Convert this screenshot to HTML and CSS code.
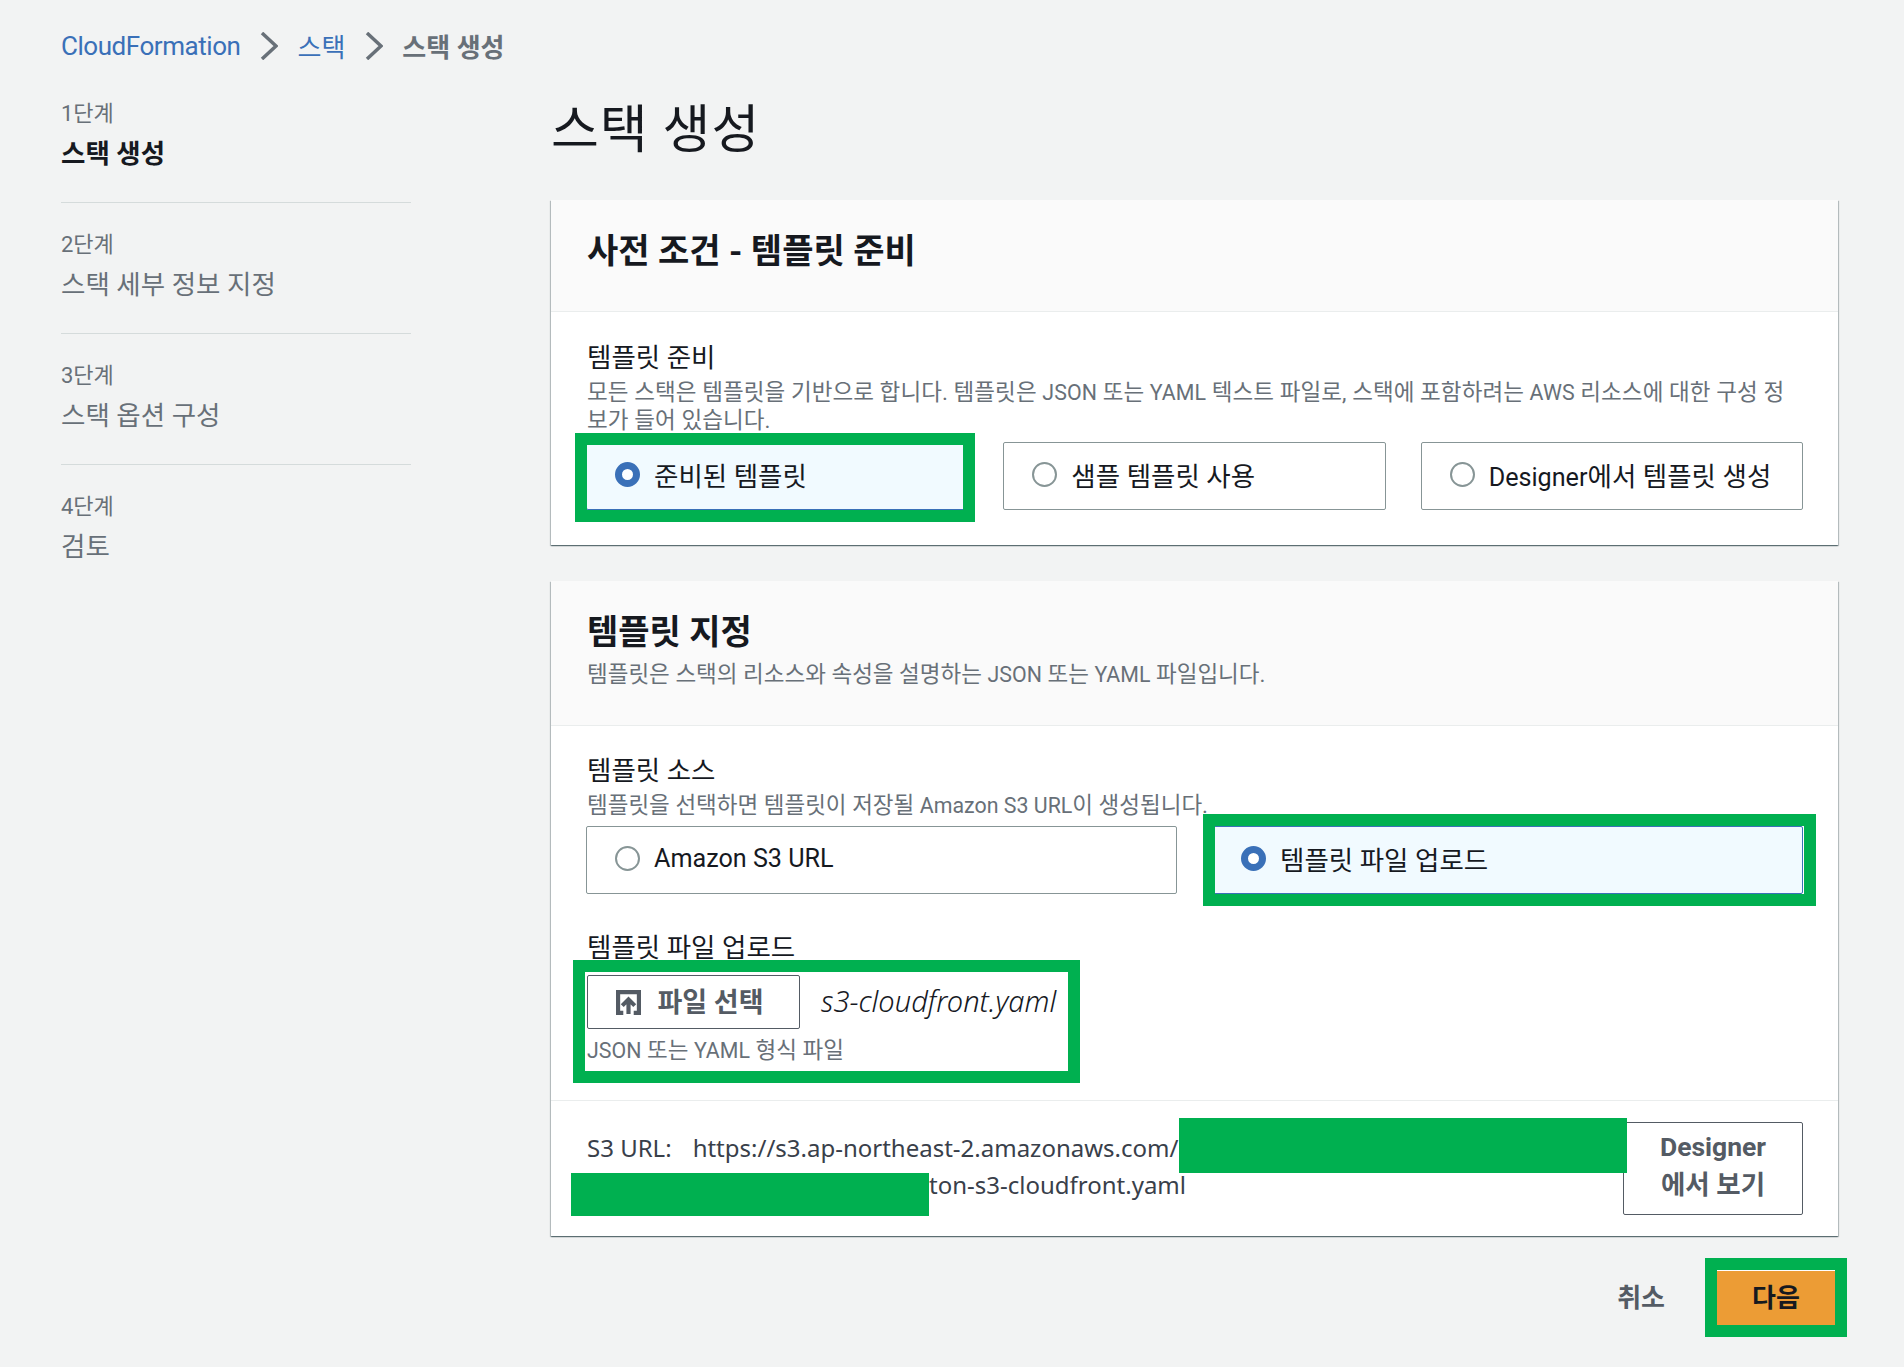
FILE: index.html
```html
<!DOCTYPE html>
<html lang="ko">
<head>
	<title>스택 생성</title>
	<meta charset="utf-8">
	<link rel="stylesheet" href="styles.css">
</head>
<body>

	<nav class="crumbs">
		<a class="crumb-root" href="#">CloudFormation</a>
		<svg class="chev" viewBox="0 0 18 28"><path d="M2 1l14 13L2 27"/></svg>
		<a href="#">스택</a>
		<svg class="chev" viewBox="0 0 18 28"><path d="M2 1l14 13L2 27"/></svg>
		<span class="crumb-now">스택 생성</span>
	</nav>

	<div class="layout">
		<aside class="steps">
			<div class="step">
				<div class="step-num">1단계</div>
				<div class="step-name current">스택 생성</div>
			</div>
			<div class="step">
				<div class="step-num">2단계</div>
				<div class="step-name">스택 세부 정보 지정</div>
			</div>
			<div class="step">
				<div class="step-num">3단계</div>
				<div class="step-name">스택 옵션 구성</div>
			</div>
			<div class="step">
				<div class="step-num">4단계</div>
				<div class="step-name">검토</div>
			</div>
		</aside>

		<main class="main">
			<h1 class="page-title">스택 생성</h1>

			<section class="panel">
				<div class="panel-head">
					<h2>사전 조건 - 템플릿 준비</h2>
				</div>
				<div class="panel-body first">
					<div class="label">템플릿 준비</div>
					<div class="hint">모든 스택은 템플릿을 기반으로 합니다. 템플릿은 <span class="latin">JSON</span> 또는 <span class="latin">YAML</span> 텍스트 파일로, 스택에 포함하려는 <span class="latin">AWS</span> 리소스에 대한 구성 정<br>보가 들어 있습니다.</div>
					<div class="cards three">
						<div class="card selected">
							<span class="radio on"></span>준비된 템플릿
							<span class="mark mark-ready"></span>
						</div>
						<div class="card"><span class="radio"></span>샘플 템플릿 사용</div>
						<div class="card"><span class="radio"></span><span><span class="latin">Designer</span>에서 템플릿 생성</span></div>
					</div>
				</div>
			</section>

			<section class="panel second">
				<div class="panel-head sub">
					<h2>템플릿 지정</h2>
					<p class="panel-desc">템플릿은 스택의 리소스와 속성을 설명하는 <span class="latin">JSON</span> 또는 <span class="latin">YAML</span> 파일입니다.</p>
				</div>
				<div class="panel-body source">
					<div class="label">템플릿 소스</div>
					<div class="hint">템플릿을 선택하면 템플릿이 저장될 <span class="latin">Amazon S3 URL</span>이 생성됩니다.</div>
					<div class="cards two">
						<div class="card"><span class="radio"></span><span class="latin">Amazon S3 URL</span></div>
						<div class="card selected">
							<span class="radio on"></span>템플릿 파일 업로드
							<span class="mark mark-upload"></span>
						</div>
					</div>

					<div class="label upload-label">템플릿 파일 업로드</div>
					<div class="upload">
						<div class="file-row">
							<button type="button" class="file-btn">
								<svg class="up-icon" viewBox="0 0 24 24"><path d="M7 22H2V2h20v20h-5M12 23V10M6 15l6-6 6 6"/></svg>
								파일 선택
							</button>
							<span class="file-name">s3-cloudfront.yaml</span>
						</div>
						<div class="hint file-hint"><span class="latin">JSON</span> 또는 <span class="latin">YAML</span> 형식 파일</div>
						<span class="mark mark-file"></span>
					</div>
				</div>
				<div class="panel-foot">
					<div class="url">
						<p class="url-line">S3 URL:<span class="url-link">https://s3.ap-northeast-2.amazonaws.com/</span><span class="redact redact-top"></span></p>
						<p class="url-line tail">ton-s3-cloudfront.yaml<span class="redact redact-bottom"></span></p>
					</div>
					<button type="button" class="designer-btn">Designer<br>에서 보기</button>
				</div>
			</section>

			<div class="actions">
				<a class="cancel" href="#">취소</a>
				<button type="button" class="next-btn">다음<span class="mark mark-next"></span></button>
			</div>
		</main>
	</div>

</body>
</html>
```

FILE: styles.css
```css
* {
	box-sizing: border-box;
}
body {
	margin: 0;
	min-height: 1367px;
	background-color: #f2f3f3;
	color: #16191f;
	font-family: Roboto, "Noto Sans CJK KR", sans-serif;
}
h1, h2, p {
	margin: 0;
}
a {
	text-decoration: none;
}
.latin {
	font-size: .95em;
	line-height: 1;
}

/* breadcrumb */
.crumbs {
	display: flex;
	align-items: center;
	height: 92px;
	padding: 0 0 1px 61px;
	font-size: 26px;
}
.crumbs a {
	color: #3a70b8;
}
.crumb-root {
	letter-spacing: -.45px;
}
.crumb-now {
	color: #687078;
	font-weight: 700;
}
.chev {
	width: 18px;
	height: 28px;
	margin: 0 19px 0 20px;
	fill: none;
	stroke: #687078;
	stroke-width: 3.5;
}

.layout {
	display: flex;
	padding: 0 66px 0 61px;
}

/* left steps */
.steps {
	width: 350px;
	margin-right: 140px;
	flex: none;
}
.step {
	padding-top: 20px;
	padding-bottom: 31px;
	border-bottom: 1px solid #d5dbdb;
}
.step:first-child {
	padding-top: 0;
}
.step:last-child {
	border-bottom: 0;
}
.step-num {
	line-height: 44px;
	font-size: 22px;
	color: #687078;
}
.step-name {
	line-height: 35px;
	font-size: 26.5px;
	color: #687078;
}
.step-name.current {
	color: #16191f;
	font-weight: 700;
}

.main {
	flex: 1;
	min-width: 0;
}
.page-title {
	height: 108px;
	line-height: 78px;
	font-size: 52px;
	font-weight: 400;
	letter-spacing: 1px;
}

/* panels */
.panel {
	background-color: #fff;
	box-shadow: 0 1px 1px 0 rgba(0, 28, 36, .4), 1px 1px 1px 0 rgba(0, 28, 36, .2), -1px 1px 1px 0 rgba(0, 28, 36, .2);
}
.panel.second {
	margin-top: 36px;
}
.panel-head {
	height: 112px;
	padding: 31px 35px 0 36px;
	background-color: #fafafa;
	border-bottom: 1px solid #eaeded;
}
.panel-head.sub {
	height: 145px;
	padding-top: 31px;
}
.panel-head h2 {
	line-height: 40px;
	font-size: 34px;
	font-weight: 700;
}
.panel-desc {
	margin-top: 7px;
	line-height: 30px;
	font-size: 22.5px;
	color: #687078;
}
.panel-body {
	padding: 29px 35px 35px 36px;
}
.panel-body.source {
	padding-top: 28px;
	padding-bottom: 36px;
}
.label {
	line-height: 34px;
	font-size: 26.5px;
}
.hint {
	margin-top: 3px;
	line-height: 28px;
	font-size: 22.5px;
	color: #687078;
}
.first .hint {
	letter-spacing: .07px;
}

/* radio cards */
.cards {
	display: grid;
	gap: 35px;
	margin: 8px 0 0 -1px;
}
.source .cards {
	margin-top: 7px;
}
.cards.three {
	grid-template-columns: 1fr 1fr 1fr;
}
.cards.two {
	grid-template-columns: 1fr 1fr;
}
.card {
	position: relative;
	display: flex;
	align-items: center;
	height: 68px;
	padding: 0 0 3px 28px;
	background-color: #fff;
	border: 1px solid #879596;
	border-radius: 2px;
	font-size: 26.5px;
}
.card.selected {
	background-color: #f1faff;
	border-color: #3a70b8;
}
.radio {
	width: 25px;
	height: 25px;
	margin-right: 14px;
	background-color: #fff;
	border: 2px solid #879596;
	border-radius: 50%;
	flex: none;
}
.radio.on {
	border: 7px solid #3a70b8;
}

/* file upload */
.upload-label {
	margin-top: 37px;
}
.upload {
	position: relative;
	margin-top: 10px;
}
.file-row {
	display: flex;
	align-items: center;
}
.file-btn {
	display: flex;
	align-items: center;
	justify-content: center;
	width: 213px;
	height: 54px;
	padding: 0 7px 4px 0;
	background-color: #fff;
	border: 1px solid #545b64;
	border-radius: 2px;
	color: #545b64;
	font-family: inherit;
	font-size: 27px;
	font-weight: 700;
}
.up-icon {
	width: 25px;
	height: 25px;
	margin: 4px 16px 0 0;
	fill: none;
	stroke: #545b64;
	stroke-width: 4;
}
.file-name {
	margin: -4px 0 0 21px;
	font-family: "Noto Sans", sans-serif;
	font-size: 29px;
	font-style: italic;
	font-weight: 300;
}
.file-hint {
	margin-top: 7px;
}

/* s3 url */
.panel-foot {
	display: flex;
	align-items: center;
	justify-content: space-between;
	height: 136px;
	padding: 0 35px 0 36px;
	border-top: 1px solid #eaeded;
}
.url {
	margin-top: -5px;
	font-family: "Noto Sans", "Noto Sans CJK KR", sans-serif;
}
.url-line {
	position: relative;
	line-height: 37px;
	font-size: 24px;
	color: #39404a;
}
.url-line.tail {
	padding-left: 342px;
}
.url-link {
	margin-left: 21px;
}
.redact {
	position: absolute;
	z-index: 2;
	background-color: #00b050;
}
.redact-top {
	left: 592px;
	top: -11px;
	width: 448px;
	height: 55px;
}
.redact-bottom {
	left: -16px;
	top: 7px;
	width: 358px;
	height: 43px;
}
.designer-btn {
	width: 180px;
	height: 93px;
	padding: 0 0 5px;
	background-color: #fff;
	border: 1px solid #545b64;
	border-radius: 2px;
	color: #545b64;
	font-family: inherit;
	font-size: 26.5px;
	font-weight: 700;
	line-height: 38px;
}

/* bottom actions */
.actions {
	display: flex;
	align-items: center;
	justify-content: flex-end;
	margin-top: 34px;
	padding-right: 3px;
}
.cancel {
	margin: -5px 52px 0 0;
	color: #545b64;
	font-size: 26px;
	font-weight: 700;
}
.next-btn {
	position: relative;
	width: 118px;
	height: 55px;
	padding: 0 0 5px;
	background-color: #ec9c35;
	border: 0;
	border-top: 1px solid #fff;
	color: #16191f;
	font-family: inherit;
	font-size: 26px;
	font-weight: 700;
}

/* green review boxes drawn over the page */
.mark {
	position: absolute;
	z-index: 1;
	border: 12px solid #00b050;
}
.mark-ready {
	left: -12px;
	top: -10px;
	width: 400px;
	height: 89px;
}
.mark-upload {
	left: -10px;
	top: -13px;
	width: 613px;
	height: 92px;
}
.mark-file {
	left: -14px;
	top: -15px;
	width: 507px;
	height: 123px;
}
.mark-next {
	left: -12px;
	top: -13px;
	width: 142px;
	height: 79px;
}
```
